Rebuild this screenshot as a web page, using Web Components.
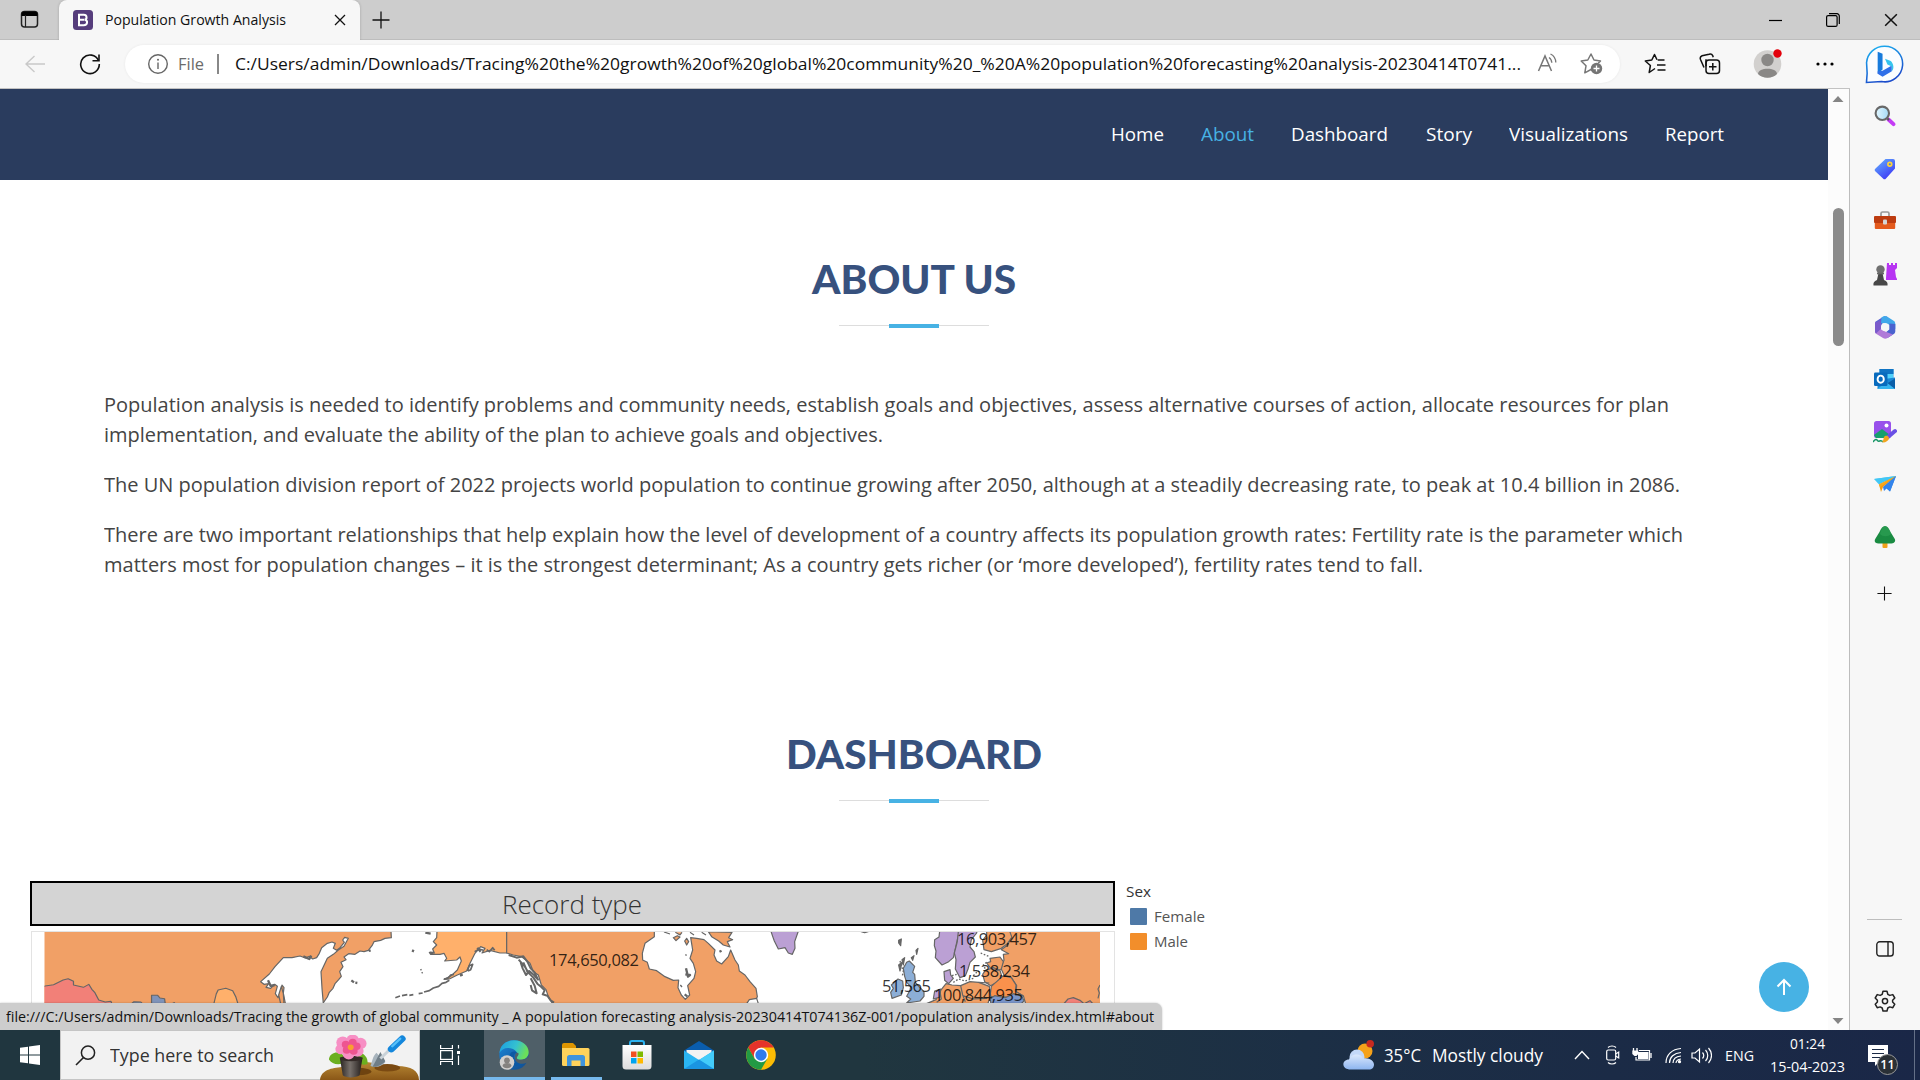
<!DOCTYPE html>
<html lang="en">
<head>
<meta charset="utf-8">
<title>Population Growth Analysis</title>
<style>
html,body{margin:0;height:100%;overflow:hidden;background:#fff}
body{font-family:"Open Sans","Noto Sans",sans-serif}
</style>
</head>
<body>
<desktop-screen></desktop-screen>
<script>
const ICONS = {
tabs:['0 0 20 20','<rect x="1.5" y="1.5" width="16" height="15.5" rx="3" fill="none" stroke="#222" stroke-width="1.5"/><path d="M1.5 6V4a2.5 2.5 0 0 1 2.500-2.500h11A2.500 2.500 0 0 1 17.500 4v2z" fill="#000"/><path d="M5.500 5v12" stroke="#222" stroke-width="1.200"/>'],
boot:['0 0 20 20','<rect width="20" height="20" rx="3.500" fill="#563d7c"/><path d="M6 4.800h4.800c3.300 0 3.700 4.300.800 4.900 3.600.500 3.200 5.500-.800 5.500H6zM6 9.700h5" fill="none" stroke="#fff" stroke-width="2"/>'],
close:['0 0 12 12','<path d="M1 1l10 10M11 1L1 11" stroke="#111" stroke-width="1.300"/>'],
plus:['0 0 18 18','<path d="M9 .5v17M.5 9h17" stroke="#111" stroke-width="1.300"/>'],
min:['0 0 14 14','<path d="M0 7.500h13" stroke="#000" stroke-width="1.200"/>'],
max:['0 0 14 14','<rect x=".6" y="2.600" width="10.500" height="10.800" rx="1.500" fill="none" stroke="#000" stroke-width="1.200"/><path d="M3 .600h7.500a2.600 2.600 0 0 1 2.800 2.800V11" fill="none" stroke="#000" stroke-width="1.200"/>'],
back:['0 0 20 18','<path d="M9.500 1L1 9l8.500 8M1 9h19" fill="none" stroke="#c9c9c9" stroke-width="1.400"/>'],
reload:['0 0 22 22','<path d="M19.500 7.500A9.300 9.300 0 1 0 20.300 11" fill="none" stroke="#111" stroke-width="1.600"/><path d="M20 1.500v6.200h-6.500" fill="none" stroke="#111" stroke-width="1.600"/>'],
info:['0 0 22 22','<circle cx="11" cy="11" r="9.300" fill="none" stroke="#666" stroke-width="1.400"/><path d="M11 9.500v6.500" stroke="#666" stroke-width="1.400"/><circle cx="11" cy="6.700" r="1" fill="#666"/>'],
read:['0 0 22 20','<path d="M1.500 18L8 3l6.500 15M4 12.700h8" fill="none" stroke="#777" stroke-width="1.500"/><path d="M12 4.500c2 1.300 2.700 3 2.800 5.300M13.500 1c3.700 1.800 5.200 4.500 5.300 8.500" fill="none" stroke="#777" stroke-width="1.300"/>'],
staradd:['0 0 24 24','<path d="M14.300 19.500 11 17.500l-6.200 3.300 1.200-7L1.200 9l6.600-1L11 2l3 6 6.500 1-2.300 2.300" fill="none" stroke="#777" stroke-width="1.500" stroke-linejoin="round"/><circle cx="16.500" cy="16.500" r="5.700" fill="#757575"/><path d="M16.500 13.500v6M13.500 16.500h6" stroke="#fff" stroke-width="1.300"/>'],
starlist:['0 0 23 22','<path d="M11 15.500 5.200 19.500l1.200-7L1.300 8l6.500-1L10.500 1.500 13 6.700M20.500 7h-6.800M21.500 12H13M21.500 17h-8" fill="none" stroke="#111" stroke-width="1.500" stroke-linejoin="round"/>'],
coll:['0 0 22 22','<rect x="7" y="7" width="13.500" height="13.500" rx="3" fill="none" stroke="#111" stroke-width="1.500"/><path d="M13.800 10v7.500M10 13.800h7.500M5 14.500 1.500 6.500a3 3 0 0 1 1.600-3.800L10 1.300a2.800 2.800 0 0 1 3.700 1.300l.5 1.700M7 6.300v7" fill="none" stroke="#111" stroke-width="1.500"/>'],
user:['0 0 30 30','<circle cx="14.500" cy="16" r="13.800" fill="#d2d0ce"/><circle cx="14.500" cy="12" r="6.200" fill="#8a8886"/><path d="M5 26c0-7 19-7 19 0-5 5-14 5-19 0z" fill="#8a8886"/><circle cx="24.500" cy="5.500" r="4.200" fill="#e3000b"/>'],
dots:['0 0 18 6','<circle cx="2" cy="3" r="1.600"/><circle cx="9" cy="3" r="1.600"/><circle cx="16" cy="3" r="1.600"/>'],
bing:['0 0 40 40','<defs><linearGradient id="a" x1="0" y1="0" x2=".4" y2="1"><stop stop-color="#1bb6f2"/><stop offset="1" stop-color="#1b4ccb"/></linearGradient></defs><path d="M20 1.200a18.300 18.300 0 1 1-3 36.300L1.500 38.500 2.200 29 1.600 18A18.300 18.300 0 0 1 20 1.200z" fill="#fbfdff" stroke="url(#a)" stroke-width="1.600"/><path d="M13 7l5 2v16l-5 4.500z" fill="#177bdc"/><path d="M13 27v2.500l5 3L27.500 27v-6L18 26.500z" fill="#2f6fe8"/><path d="M20.500 14l2.500 6 4.500 2v5c3-3 1.500-8-1-10.500z" fill="#35c5ee"/>'],
search:['0 0 22 22','<defs><linearGradient id="a"><stop stop-color="#e2f6ff"/><stop offset="1" stop-color="#a5dbf7"/></linearGradient></defs><path d="M14.500 14.500l5 4.700" stroke="#c43cf5" stroke-width="3.800" stroke-linecap="round"/><path d="M12.500 12.500l2.500 2.500" stroke="#555" stroke-width="2"/><circle cx="8.300" cy="8.300" r="6.700" fill="url(#a)" stroke="#686868" stroke-width="2.100"/>'],
tag:['0 0 22 22','<defs><linearGradient id="a" x1="0" y1="0" x2=".7" y2="1"><stop stop-color="#64b4ff"/><stop offset="1" stop-color="#3d37f5"/></linearGradient></defs><path d="M11.500 1H19a2 2 0 0 1 2 2v7.500L12 20.500a2 2 0 0 1-3 0L1.500 13.500a2 2 0 0 1 0-3z" fill="url(#a)"/><circle cx="15.800" cy="6.300" r="1.900" fill="#4d80d0" stroke="#ffd338" stroke-width="1.700"/>'],
tools:['0 0 24 22','<path d="M8 6V3.500A1.500 1.500 0 0 1 9.500 2h5A1.500 1.500 0 0 1 16 3.500V6" fill="none" stroke="#999" stroke-width="1.700"/><rect x="1.800" y="11" width="20.400" height="8" rx="1" fill="#e45a1c"/><rect x="1" y="6" width="22" height="7" rx="1" fill="#bd3c10"/><rect x="10" y="9.500" width="4" height="5" rx="1" fill="#d5d5d5"/>'],
chess:['0 0 24 24','<path d="M14 1h2v2h2V1h2v2h2V1h2v5l-2 2 1 7 1 2v1H13v-2z" fill="#b735f2"/><circle cx="7.500" cy="7.500" r="4.200" fill="#707070"/><path d="M5.500 11h4l1.500 7c3 1 4 3 3.500 5.500H.500C0 21 1 19 4 18z" fill="#484848"/><path d="M4 11.500h7" stroke="#666" stroke-width="1.600"/>'],
m365:['0 0 22 24','<path d="M1 7 8 2.500 13 1 9 7.500 7 12v4L1 17z" fill="#5b62d2"/><path d="M7.500 2.500C9 1 11 .5 13 1.500l7 4.500c1 .7 1.300 2 1.300 3v5L15 9.500 7 8z" fill="#41a8ea"/><path d="M21.300 9v7c0 1.500-.5 2.300-1.500 3l-6.300 4L11 18l4.300-3.500V8.500z" fill="#4a63cf"/><path d="M1 7.500v9c0 1 .5 2 1.500 2.500L9 23c1.500.9 3 .9 4.500 0l5.500-3.500-8-3L6.500 14V8z" fill="#b07ad8"/><path d="M1 8 6.700 5v9L2 18.500C1.300 18 1 17.300 1 16.500z" fill="#7a5bcb"/><circle cx="11" cy="12" r="4" fill="#f7f7f7"/>'],
outlook:['0 0 22 22','<rect x="5.500" y="1" width="14" height="14" fill="#29a2e6"/><path d="M5.500 1h14v5h-14z" fill="#1074c4"/><path d="M12 6h7v5h-7z" fill="#50d0fa"/><path d="M3.500 12 21 9.500V21H3.500z" fill="#1a88d6"/><path d="M13 15.500l8-5V21z" fill="#0b5ea8"/><path d="M3.500 21 12 14l9 7z" fill="#36b4ef"/><rect y="4.500" width="13.500" height="13.500" rx="1.300" fill="#086bbd"/><ellipse cx="6.700" cy="11.200" rx="3.100" ry="3.600" fill="none" stroke="#fff" stroke-width="1.900"/>'],
image:['0 0 24 24','<rect x="1" y="1" width="17" height="17" rx="2.500" fill="#9850eb"/><path d="M1 15 9 9l8 6v2l-2 1H3z" fill="#16a06d"/><circle cx="13.500" cy="5.500" r="2" fill="#fff"/><path d="M0 22c3-4 4-2 5-1s3-2 5 1" fill="none" stroke="#169565" stroke-width="1.500"/><path d="M22 11l-7 6" stroke="#6950e5" stroke-width="4" stroke-linecap="round"/><path d="M12 16c3-1 4 1 4 3-2 3-5 4-7 3 2-1 1-5 3-6z" fill="#f1a51e"/>'],
plane:['0 0 22 20','<path d="M0 5 22 2 16 8z" fill="#42c7f5"/><path d="M22 2 16 17.500l-6-5z" fill="#2582e8"/><path d="M22 2 5 10.500 7 18l2-5z" fill="#f39c12"/><path d="M0 5 22 2 5 10.500z" fill="#42c7f5"/><path d="M22 2 5 10.300 6 13z" fill="#f8a81c"/><path d="M22 2 9 13l1 4 3-3 3 3.500z" fill="#3384ec"/>'],
tree:['0 0 22 24','<rect x="8.500" y="17" width="5" height="6" rx="1" fill="#f1a21b"/><path d="M11 1c2 0 4 2 5.500 6l4 6.500c2 3-1 5-3 5h-13c-3 0-5-2-3-5l4-6.500C7 3 9 1 11 1z" fill="#1a8b42"/><path d="M11 1c3 0 5 5 6 8-3 3-8 3-11 0 1-4 3-8 5-8z" fill="#31a457" fill-opacity=".6"/>'],
panel:['0 0 18 16','<rect x=".8" y=".8" width="16.400" height="14.200" rx="2.800" fill="none" stroke="#222" stroke-width="1.400"/><path d="M12 1v14" stroke="#222" stroke-width="1.400"/>'],
gear:['0 0 22 22','<path d="M9 1.300h4l.8 3 2 1.100 3-.8 2 3.400-2.200 2.200v1.800l2.200 2.200-2 3.500-3-.8-2 1.100-.8 3H9l-.8-3-2-1.100-3 .800-2-3.500 2.200-2.200v-1.800L1.200 8l2-3.400 3 .8 2-1.100z" fill="none" stroke="#222" stroke-width="1.500" stroke-linejoin="round"/><circle cx="11" cy="11.100" r="2.600" fill="none" stroke="#222" stroke-width="1.500"/>'],
arrowup:['0 0 16 18','<path d="M8 17V2M1.500 8.500 8 2l6.500 6.500" fill="none" stroke="#fff" stroke-width="2"/>'],
triup:['0 0 12 8','<path d="M6 1l5.500 6H.5z" fill="#858585"/>'],
tridn:['0 0 12 8','<path d="M6 7L.5 1h11z" fill="#858585"/>'],
win:['0 0 20 20','<path d="M0 2.800l8-1.100v7.800H0zM9 1.500 20 0v9.500H9zM0 10.500h8v7.800l-8-1.100zM9 10.500h11V20L9 18.500z" fill="#fff"/>'],
mag:['0 0 21 21','<circle cx="13" cy="7.700" r="6.600" fill="none" stroke="#222" stroke-width="1.500"/><path d="M8.500 12.500 1 20" stroke="#222" stroke-width="1.600"/>'],
flower:['0 0 100 48','<defs><linearGradient id="g" x1="0" y1="0" x2="0" y2="1"><stop stop-color="#b98935"/><stop offset="1" stop-color="#8a5717"/></linearGradient><linearGradient id="p"><stop stop-color="#282220"/><stop offset=".45" stop-color="#77706b"/><stop offset="1" stop-color="#221c1a"/></linearGradient></defs><path d="M0 48c1-11 12-13 22-14l18-5c15-2 25 6 38 4 14 0 22 5 22 15z" fill="url(#g)"/><ellipse cx="38" cy="39" rx="14" ry="4" fill="#6e4310"/><ellipse cx="68" cy="35" rx="13" ry="4" fill="#7b4a12"/><path d="M9 26c1-8 10-9 14-5l3 8c-7 4-14 2-17-3zM48 31c1-7-4-12-9-12l-1 8c2 4 6 6 10 4z" fill="#6caf20"/><path d="M20 24h23l-3 19c-4 3-14 3-17 0z" fill="url(#p)"/><ellipse cx="31.500" cy="25" rx="11.500" ry="3" fill="#352b28"/><g fill="#f78fc4"><circle cx="23" cy="8" r="6.500"/><circle cx="33" cy="6" r="6.500"/><circle cx="41" cy="9" r="6"/><circle cx="38" cy="17" r="6"/><circle cx="29" cy="20" r="6"/><circle cx="21" cy="15" r="5.500"/></g><g fill="#ee5590"><circle cx="26" cy="10" r="4"/><circle cx="33" cy="8" r="4"/><circle cx="37" cy="12" r="4"/><circle cx="34" cy="17" r="4"/><circle cx="27" cy="16" r="4"/></g><circle cx="31" cy="13" r="3" fill="#f9a030"/><path d="M57 19l9 10c-4 5-10 6-15 4 2-5 2-10 6-14z" fill="#a8b4bd"/><path d="M61 18l5 10c-4 5-9 6-13 6z" fill="#707e87"/><path d="M61 25 70 16" stroke="#c9d2d8" stroke-width="3"/><path d="M72 15 83 4" stroke="#1487dc" stroke-width="7" stroke-linecap="round"/><path d="M73 12 81 4" stroke="#57c0fa" stroke-width="2.500" stroke-linecap="round"/>'],
task:['0 0 20 20','<path d="M.6 0v3.500h11.800V0M.6 20v-3.500h11.800V20M18.500 0v3.500M18.500 10.500V20" fill="none" stroke="#fff" stroke-width="1.200"/><rect x=".6" y="5.600" width="11.800" height="8.800" fill="none" stroke="#fff" stroke-width="1.200"/><rect x="17" y="6" width="3" height="3" fill="#fff"/>'],
edge:['0 0 30 30','<defs><linearGradient id="a" x1="0" y1="0" x2="1" y2=".3"><stop stop-color="#1b9de2"/><stop offset=".6" stop-color="#35c1d0"/><stop offset="1" stop-color="#6be05a"/></linearGradient><linearGradient id="b" x1="0" y1="0" x2="1" y2="1"><stop stop-color="#1b87da"/><stop offset="1" stop-color="#114a8b"/></linearGradient></defs><circle cx="15" cy="15" r="14.700" fill="url(#b)"/><path d="M.5 13C1 5 7 .3 15 .3c9 0 14.700 6 14.700 12 0 5-4 7.500-8 7.500-4 0-5-1.500-3.500-3.500S17 8 9 8C5 8 2 10 .5 13z" fill="url(#a)"/><path d="M11 14c-3 6 2 13 10 12l7-4c-7 4-13 1-13-5 0-3 1-4 3-4-2-2-5-2-7 1z" fill="#0c59a4"/><path d="M18.500 16.300c-1.500 2-.5 3.500 3.500 3.500 3 0 6-1 7.500-4l.5 5-2 2c-7 3-12-1-12-5s1-5 2.500-5 1.500 2 0 3.500z" fill="#4f5f68"/><circle cx="8" cy="22.500" r="7.300" fill="#d2d0ce"/><circle cx="8" cy="20.500" r="2.900" fill="#85827f"/><path d="M3.500 26c0-4 9-4 9 0-2 3-7 3-9 0z" fill="#85827f"/>'],
folder:['0 0 28 24','<path d="M0 2a2 2 0 0 1 2-2h9l3 3v6H0z" fill="#dd9500"/><path d="M0 5h26a1.500 1.500 0 0 1 1.500 1.500v15A1.500 1.500 0 0 1 26 23H1.500A1.500 1.500 0 0 1 0 21.500z" fill="#ffd35b"/><path d="M5 23V14.500A2.500 2.500 0 0 1 7.500 12h13a2.500 2.500 0 0 1 2.500 2.500V23h-4.500v-5.500h-9V23z" fill="#3f94dc"/>'],
store:['0 0 30 30','<defs><linearGradient id="a" x1="0" y1="0" x2="0" y2="1"><stop stop-color="#fff"/><stop offset="1" stop-color="#dcdcdc"/></linearGradient></defs><path d="M8 6V3a2 2 0 0 1 2-2h10a2 2 0 0 1 2 2v3" fill="none" stroke="#2bb2f0" stroke-width="2"/><path d="M.5 5h29v21a3.500 3.500 0 0 1-3.500 3.500H4A3.500 3.500 0 0 1 .5 26z" fill="url(#a)"/><path d="M9 11.500h5.500V17H9z" fill="#f25022"/><path d="M15.500 11.500H21V17h-5.500z" fill="#7fba00"/><path d="M9 18h5.500v5.500H9z" fill="#00a4ef"/><path d="M15.500 18H21v5.500h-5.500z" fill="#ffb900"/>'],
mail:['0 0 30 28','<path d="M0 9.500 15 0l15 9.500V20H0z" fill="#0a5dad"/><path d="M2.500 9h25v10h-25z" fill="#f3f3f3"/><path d="M0 9.500 15 19 30 9.500V27a1 1 0 0 1-1 1H1a1 1 0 0 1-1-1z" fill="#2ab5f3"/><path d="M30 9.500V27a1 1 0 0 1-1 1L15 19z" fill="#43ccfa"/><path d="M0 28 15 18.500 30 28z" fill="#1a95e2"/>'],
chrome:['0 0 30 30','<circle cx="15" cy="15" r="14.800" fill="#fbbc05"/><path d="M2.200 7.600A14.800 14.800 0 0 1 27.800 7.600H15L8.600 18.700z" fill="#e5332a"/><path d="M2.200 7.600A14.800 14.800 0 0 0 15 29.800l6.400-11.100H8.600z" fill="#229a44"/><circle cx="15" cy="15" r="7.200" fill="#fff"/><circle cx="15" cy="15" r="5.700" fill="#2f7bed"/>'],
cloud:['0 0 31 30','<defs><linearGradient id="a" x1="0" y1="0" x2="0" y2="1"><stop stop-color="#dbe8fd"/><stop offset="1" stop-color="#8db5f0"/></linearGradient></defs><circle cx="22" cy="11" r="7.500" fill="#f5a11a"/><circle cx="14" cy="17" r="7.500" fill="#c3d8f9"/><path d="M6 29.500c-8-1-7-10 0-10 2-6 12-7 14-1 7-1 11 3 11 6 0 3-2 5-5 5z" fill="url(#a)"/><circle cx="27.200" cy="3.800" r="3.800" fill="#c72a20"/>'],
chev:['0 0 16 10','<path d="M1 9l7-7.500L15 9" fill="none" stroke="#fff" stroke-width="1.400"/>'],
meet:['0 0 16 20','<rect x="1.700" y="5" width="9" height="10" rx="1.500" fill="none" stroke="#fff" stroke-width="1.200"/><path d="M10.700 9l3-2v6l-3-2M3 2.500c2-2 6-2 8 0M3 17.500c2 2 6 2 8 0" fill="none" stroke="#fff" stroke-width="1.200"/>'],
battery:['0 0 20 16','<path d="M7 3.500h10.500v9.500H4V10" fill="none" stroke="#fff" stroke-width="1.200"/><rect x="6" y="5" width="10.500" height="7" fill="#fff"/><path d="M19 6v5M1.500 1v3M5 1v3" stroke="#fff" stroke-width="1.300"/><path d="M.3 3.500h6V7L4.500 9h-2L.3 7z" fill="#fff"/>'],
wifi:['0 0 17 17','<g fill="none" stroke="#fff" stroke-width="1.200"><path d="M1 16C1 8 7 2 16 1.500M4.500 16c0-6 4.500-10 11.500-10.500M8 16c0-4 3-6.500 8-7M11 16c0-2 1.500-3.500 5-4"/></g><circle cx="14.500" cy="14.700" r="1.600" fill="#fff"/>'],
sound:['0 0 21 17','<path d="M1 6h3l4.500-4v13L4 11H1z" fill="none" stroke="#fff" stroke-width="1.200"/><path d="M11.500 5.500c1.500 1.800 1.500 4.200 0 6M14.500 3c3 3.200 3 7.800 0 11M17.500 1c4 4.500 4 10.500 0 15" fill="none" stroke="#fff" stroke-width="1.200"/>'],
note:['0 0 20 21','<path d="M0 0h20v17H11l-4 4v-4H0z" fill="#fff"/><path d="M4 4.500h12M4 8.500h12M4 12.500h9" stroke="#1b2a45" stroke-width="1.200"/>']
};

class UiIcon extends HTMLElement{
  constructor(){super();this.attachShadow({mode:'open'})}
  connectedCallback(){
    const [vb,body]=ICONS[this.getAttribute('name')];
    const w=this.getAttribute('w')||vb.split(' ')[2], h=this.getAttribute('h')||vb.split(' ')[3];
    this.shadowRoot.innerHTML=`<style>:host{display:block;flex:none;width:${w}px;height:${h}px}svg{display:block;width:100%;height:100%}</style><svg viewBox="${vb}" preserveAspectRatio="none">${body}</svg>`;
  }
}
customElements.define('ui-icon',UiIcon);

/* Single line of text stretched to a set width. */
class FitText extends HTMLElement{
  constructor(){
    super();this.attachShadow({mode:'open'}).innerHTML='<style>:host{display:block;flex:none;white-space:nowrap}span{display:inline-block;transform-origin:0 50%}</style><span><slot></slot></span>';
  }
  connectedCallback(){this.fit();if(document.fonts)document.fonts.ready.then(()=>this.fit())}
  fit(){
    const s=this.shadowRoot.querySelector('span'),w=+this.getAttribute('w');
    s.style.transform='';const n=s.getBoundingClientRect().width;
    this.style.width=w+'px';
    if(n)s.style.transform='scaleX('+(w/n)+')';
  }
}
customElements.define('fit-text',FitText);

function part(tag,html){
  customElements.define(tag,class extends HTMLElement{
    constructor(){super();this.attachShadow({mode:'open'})}
    connectedCallback(){this.shadowRoot.innerHTML=html}
  });
}

part('tab-strip',`<style>
:host{display:flex;height:39px;background:#cdcdcd;border-bottom:1px solid #bdbdbd;align-items:center;color:#111}
.tab{display:flex;align-items:center;box-sizing:border-box;width:301px;height:40px;margin:0 0 -1px 19px;padding-left:14px;background:#f7f7f7;border-radius:8px 8px 0 0;box-shadow:0 0 3px #0003;clip-path:inset(0 -4px 0 -4px)}
fit-text{font-size:14.5px;line-height:20px;margin:0 48px 0 12px}
</style>
<ui-icon name="tabs" style="margin-left:20px;margin-top:1px" w="20" h="20"></ui-icon>
<div class="tab"><ui-icon name="boot"></ui-icon><fit-text w="181">Population Growth Analysis</fit-text><ui-icon name="close"></ui-icon></div>
<ui-icon name="plus" style="margin-left:12px"></ui-icon>
<ui-icon name="min" style="margin-left:auto"></ui-icon>
<ui-icon name="max" style="margin-left:43px"></ui-icon>
<ui-icon name="close" w="14" h="14" style="margin:0 22px 0 44px"></ui-icon>`);

part('address-bar',`<style>
:host{display:flex;height:48px;background:#f7f7f7;border-bottom:1px solid #c2c2c2;align-items:center;width:1850px}
.pill{display:flex;align-items:center;box-sizing:border-box;width:1495px;height:38px;margin-left:24px;padding-left:22px;border-radius:19px;background:#fff;box-shadow:0 0 3px #0001}
.pill fit-text{font-size:17px;line-height:24px}
.bar{width:1.5px;height:20px;background:#888;margin:0 16px 0 13px}
</style>
<ui-icon name="back" style="margin-left:25px"></ui-icon>
<ui-icon name="reload" style="margin-left:34px"></ui-icon>
<div class="pill"><ui-icon name="info"></ui-icon><fit-text w="26" style="color:#6b6b6b;margin-left:9px">File</fit-text><div class="bar"></div>
<fit-text w="1286" style="color:#111">C:/Users/admin/Downloads/Tracing%20the%20growth%20of%20global%20community%20_%20A%20population%20forecasting%20analysis-20230414T0741...</fit-text>
<ui-icon name="read" style="margin-left:16px;margin-top:-3px"></ui-icon><ui-icon name="staradd" style="margin-left:21px"></ui-icon></div>
<ui-icon name="starlist" style="margin-left:24px"></ui-icon>
<ui-icon name="coll" style="margin-left:32px"></ui-icon>
<ui-icon name="user" style="margin-left:32px;margin-top:-2px"></ui-icon>
<ui-icon name="dots" style="margin-left:33px"></ui-icon>`);

part('side-bar',`<style>
:host{display:flex;flex-direction:column;align-items:center;box-sizing:border-box;width:70px;background:#f7f7f7;padding-right:1px}
div{display:flex;align-items:center;justify-content:center;height:52.6px;flex:none}
hr{width:35px;height:1px;border:0;background:#bdbdbd;margin:auto 0 0;flex:none}
</style>
<div style="height:50px;padding-bottom:0"><ui-icon name="bing" w="39" h="39" style="margin-top:-2px"></ui-icon></div>
${['search','tag','tools','chess','m365','outlook','image','plane','tree'].map(n=>`<div><ui-icon name="${n}"></ui-icon></div>`).join('')}
<div style="height:61px"><ui-icon name="plus" w="15" h="15"></ui-icon></div>
<hr><div style="height:58px"><ui-icon name="panel"></ui-icon></div><div style="height:46px;padding-bottom:6px"><ui-icon name="gear"></ui-icon></div>`);

part('page-nav',`<style>
:host{display:flex;height:91px;box-sizing:border-box;padding-bottom:2px;align-items:center;justify-content:flex-end;background:#2a3c5e;padding-right:104px;gap:37.2px;color:#fff;font-size:18.5px;line-height:28px;font-weight:500}
</style>
<fit-text w="53">Home</fit-text><fit-text w="53" style="color:#47b2e4">About</fit-text><fit-text w="97">Dashboard</fit-text><fit-text w="46">Story</fit-text><fit-text w="119">Visualizations</fit-text><fit-text w="59">Report</fit-text>`);

part('section-title',`<style>
:host{display:flex;flex-direction:column;align-items:center;height:85px}
.t{font:900 39px/48px Lato,"Open Sans",sans-serif;color:#37517e}
.rule{display:flex;align-items:center;width:150px;height:4px;margin-top:21px;justify-content:center;background:linear-gradient(#ddd,#ddd) 0 1px/100% 1px no-repeat}
.rule i{width:50px;height:4px;background:#47b2e4}
</style><div class="t"><slot></slot></div><div class="rule"><i></i></div>`);

part('about-text',`<style>
:host{display:flex;flex-direction:column;gap:20px;padding:0 104px;color:#444;font-size:20px;line-height:30px}
</style>
<div><fit-text w="1565">Population analysis is needed to identify problems and community needs, establish goals and objectives, assess alternative courses of action, allocate resources for plan</fit-text><fit-text w="779">implementation, and evaluate the ability of the plan to achieve goals and objectives.</fit-text></div>
<fit-text w="1576">The UN population division report of 2022 projects world population to continue growing after 2050, although at a steadily decreasing rate, to peak at 10.4 billion in 2086.</fit-text>
<div><fit-text w="1579">There are two important relationships that help explain how the level of development of a country affects its population growth rates: Fertility rate is the parameter which</fit-text><fit-text w="1319">matters most for population changes – it is the strongest determinant; As a country gets richer (or ‘more developed’), fertility rates tend to fall.</fit-text></div>`);

part('world-map',`<style>:host{display:block;width:1085px;height:100px}svg{display:block;overflow:visible}text{font:16.5px "Open Sans",sans-serif;fill:#000;fill-opacity:.8}</style>
<svg width="1085" height="100" viewBox="30 931 1085 100">
<defs><clipPath id="c"><rect x="44.500" y="932" width="1055.500" height="100"/></clipPath></defs>
<rect x="31.500" y="931.500" width="1083" height="120" fill="#fff" stroke="#e3e3e3"/>
<g clip-path="url(#c)" stroke="#666" stroke-linejoin="round">
<g transform="translate(240 925) scale(.33333)" stroke-width="3.600" fill="#f1a066">
<path d="M-620 0H452L454 38 435 40 422 46 402 50 396 62 385 76 372 80 360 78 345 88 326 86 312 96 318 104 303 112 309 125 299 140 304 154 296 164 285 176 279 190 268 202 262 216 248 236V300H-620z"/>
<path fill="#fff" d="M250 236 246 190 243 140 262 100 280 88 295 75 312 64 325 40 314 37 308 45 313 52 300 68 290 76 280 70 286 55 276 51 262 55 245 68 238 85 230 98 218 102 208 94 196 99 180 93 156 98 130 98 105 125 88 147 62 170 72 178 86 176 78 187 92 190 104 178 112 184 106 206 114 218 122 202 126 180 132 188 130 204 137 240z"/>
<path d="M122 236 116 210 124 184 130 206 132 236z"/>
<path d="M592 0 590 38 580 50 590 60 578 72 583 84 568 82 572 88 600 88 612 85 620 100 614 108 650 105 660 96 664 108 652 135 634 152 612 163 628 162 652 150 680 138 690 115 705 85 722 65 735 70 726 84 750 76 780 84 800 84V0z" fill="#ffb06b"/>
<path d="M800 0H1243V35L1215 55 1207 85 1208 105 1222 112 1228 132 1250 137 1275 155 1300 166 1316 165 1314 188 1324 210 1336 223 1349 210 1343 182 1362 160 1367 140 1360 115 1350 100 1358 75 1354 50 1352 38 1370 40 1392 44 1405 55 1425 75 1422 90 1430 108 1445 117 1465 95 1472 75 1485 105 1495 120 1498 138 1515 150 1530 170 1548 190 1552 215 1540 240H940L925 215 918 194 904 180 895 150 880 140 870 115 845 95 820 90 800 84z"/>
<path d="M1405 20 1415 35 1436 48 1450 60 1470 66 1462 50 1478 44 1466 38 1476 22z"/>
<path d="M1300 38 1312 32 1320 36 1308 47zM1334 48 1340 40 1346 50 1340 60zM1272 21 1290 27M1306 22 1320 30 1326 22M1350 22 1362 30M1385 22 1398 30"/>
<path d="M1520 236 1528 224 1550 220 1555 236z" fill="#fff"/>
<path fill="none" stroke-width="6" d="M806 90 830 98 850 94 862 110 872 130 884 142 894 164 882 150 868 138 858 150 848 130 842 112M850 112 862 140 880 158 892 176 904 186 914 196 908 208 922 212 932 226 942 233M872 160 884 182 890 205 876 196 872 180M836 104 854 124 866 145"/>
<path fill="none" stroke-width="5" d="M466 218 480 213M486 212 502 209M508 211 520 209M536 206 548 204M552 201 568 197 580 189 596 184 606 175 618 172 628 166M612 162 624 160 632 150 642 148M682 138 688 122 698 118 692 134 684 138M704 80 718 72 730 76M740 74 748 80 758 68 764 76"/>
<path fill="none" stroke-width="7" d="M334 166 342 172M346 173 352 174M516 76 522 79M570 83 580 84M660 152 668 148M386 78 392 76M1440 76 1443 82M1338 130 1344 155 1350 150 1336 148M1334 208 1342 214M190 94 208 102 214 92M84 166 92 183 104 180M712 68 722 80M556 23 572 26"/>
<path fill="none" stroke-width="4" d="M545 142 548 145M542 132 544 136M1336 89 1340 91M1321 180 1326 186"/>
</g>
<g transform="translate(0 870) scale(.3827 .33333)" stroke-width="3.200">
<path d="M100 352 118 348 140 344 165 330 178 326 192 334 192 345 218 352 232 343 240 358 248 368 258 390 275 396 290 394 298 420H100z" fill="#f28078"/>
<path d="M396 376 412 376 418 384 430 386 434 420H396zM340 405 350 395 368 396 376 405zM448 402 455 398 460 404z" fill="#7f93ba"/>
<path d="M558 405 565 372 570 360 590 355 608 362 616 380 624 410z" fill="#ffb06b"/>
</g>
<g transform="translate(740 925) scale(.33333)" stroke-width="3.600" fill="#f1a066">
<path fill="#bba0d4" d="M90 10 98 34 103 48 115 72 135 68 145 84 157 88 165 70 164 50 178 10z"/>
<path fill="#666" d="M364 20 374 23 384 20zM476 46 484 42 482 62 476 54zM528 76 534 70 530 88zM514 98 522 92 518 106zM486 104 494 98 490 120zM476 120 486 112 480 138z"/>
<path fill="#8caed6" d="M500 112 508 108 524 124 518 142 524 148 526 172 538 186 552 200 552 214 540 228 500 234 512 222 500 214 510 196 512 184 500 172 494 154 490 130z"/>
<path fill="#8caed6" d="M474 162 488 168 490 188 484 210 456 220 452 202 460 190 454 180z"/>
<path fill="#bba0d4" d="M600 10 597 36 584 44 583 62 588 78 586 98 606 120 626 110 640 98 645 76 652 44 660 10z"/>
<path fill="#bba0d4" d="M656 10 652 50 643 84 648 104 646 132 660 158 676 152 684 132 690 112 706 96 702 80 690 66 694 44 710 24 712 10z"/>
<path d="M740 10 740 30 728 46 732 74 754 80 784 70 802 56 816 36 812 10z"/>
<path d="M806 10 816 38 800 62 784 74 806 86 790 88 792 106 782 128 792 150 814 158 830 182 828 200 850 212 858 240H1100V10z"/>
<path d="M750 100 780 96 790 110 784 132 770 138 752 130 740 114 752 110zM736 136 760 128 780 136 786 156 770 172 752 182 734 170 728 148z"/>
<path d="M754 184 770 170 790 152 814 158 828 180 826 198 848 212 800 216 750 214z" fill="#f9914c"/>
<path d="M560 236 588 224 602 196 618 176 636 180 662 182 690 170 716 172 748 184 752 212 742 240z"/>
<path fill="none" d="M662 182 668 210 676 230M600 200 604 222 590 232M668 212 700 222 742 220M716 172 748 174M1080 180 1074 192 1078 204 1074 220"/>
<path fill="#bba0d4" d="M612 140 630 134 632 150 640 160 626 176 614 166zM584 198 602 192 600 216 580 222z"/>
<path fill="#7a95ca" d="M750 222 764 212 796 218 820 206 846 214 852 228 840 240H754z"/>
<path fill="#f28078" d="M970 238 984 222 1000 218 1020 226 1032 236 1050 227 1062 240z"/>
<path fill="none" stroke-width="4" stroke-dasharray="5 5" d="M640 172 656 162 676 168 700 160M700 152 714 138 722 142M740 112 730 120 736 132M722 84 746 94M480 108 490 140 486 156M636 152 650 148"/>
</g></g>
<text x="549" y="965.500" textLength="90">174,650,082</text>
<text x="957" y="944.500" textLength="80">16,903,457</text>
<text x="959" y="977" textLength="71">1,538,234</text>
<text x="882" y="991.500" textLength="49">51,565</text>
<text x="934" y="1000.500" textLength="89">100,844,935</text>
</svg>`);

part('record-dashboard',`<style>
:host{display:flex;padding-left:30px;gap:11px;height:149px;color:#333}
.head{box-sizing:border-box;width:1085px;height:45px;border:2px solid #000;background:#d4d4d4;display:flex;justify-content:center;align-items:center;font-weight:300;font-size:25.500px;line-height:40px;margin-bottom:5px;padding-right:2px}
.leg{font-size:15px;line-height:20px}
.row{display:flex;align-items:center;gap:7px;height:25px;padding-left:4px;color:#555}
.row fit-text{margin-top:-2px}
.row i{width:17px;height:17px;border-radius:1px}
</style>
<div><div class="head"><fit-text w="140">Record type</fit-text></div><world-map></world-map></div>
<div class="leg"><fit-text w="25" style="margin-bottom:3px">Sex</fit-text>
<div class="row"><i style="background:#4e79a7"></i><fit-text w="51">Female</fit-text></div>
<div class="row"><i style="background:#f28e2b"></i><fit-text w="34">Male</fit-text></div></div>`);

part('scroll-bar',`<style>
:host{display:flex;flex-direction:column;align-items:center;width:21px;background:#fcfcfc;border-right:1px solid #bdbdbd}
i{width:11px;height:138px;border-radius:6px;background:#8b8b8b;margin-top:105px}
</style><ui-icon name="triup" style="margin-top:6px;margin-left:-1px"></ui-icon><i></i><ui-icon name="tridn" style="margin:auto 0 5px -1px"></ui-icon>`);

part('task-bar',`<style>
:host{display:flex;height:50px;align-items:center;background:linear-gradient(90deg,#20363f 0,#20363f 45%,#1c2f45 68%,#1a2747 100%);color:#fff;font-size:18px;line-height:26px}
.s{display:flex;align-items:center;box-sizing:border-box;width:360px;height:50px;margin-left:20px;padding-left:14px;background:#f2f2f2;border:1px solid #c5c5c5;color:#333}
.tile{display:flex;align-items:center;justify-content:center;box-sizing:border-box;height:50px;border-bottom:3px solid #76b9ed;padding-top:3px}
.clock{display:flex;flex-direction:column;align-items:center;font-size:15px;line-height:23px;width:77px;margin-left:15px}
.note{position:relative;margin-left:22px}
.b{position:absolute;left:9px;top:9px;width:19px;height:19px;border:1px solid #999;border-radius:50%;background:#2a3036;font:600 12.500px/19px "Open Sans",sans-serif;text-align:center}
.end{width:1px;height:50px;background:#647087;margin-left:auto;margin-right:5px}
</style>
<ui-icon name="win" style="margin-left:20px"></ui-icon>
<div class="s"><ui-icon name="mag"></ui-icon><fit-text w="164" style="margin-left:14px">Type here to search</fit-text><ui-icon name="flower" style="margin-left:46px;margin-top:4px" w="99" h="45"></ui-icon></div>
<ui-icon name="task" style="margin-left:20px"></ui-icon>
<div class="tile" style="margin-left:24px;width:61px;background:#4f5f68"><ui-icon name="edge" style="margin-left:-1px"></ui-icon></div>
<div class="tile" style="margin-left:6px;width:51px"><ui-icon name="folder" style="margin-left:-1px"></ui-icon></div>
<ui-icon name="store" style="margin-left:20px"></ui-icon>
<ui-icon name="mail" style="margin-left:32px"></ui-icon>
<ui-icon name="chrome" style="margin-left:32px"></ui-icon>
<ui-icon name="cloud" style="margin-left:567px"></ui-icon>
<fit-text w="37" style="margin-left:10px">35°C</fit-text><fit-text w="111" style="margin-left:11px">Mostly cloudy</fit-text>
<ui-icon name="chev" style="margin-left:31px"></ui-icon><ui-icon name="meet" style="margin-left:15px"></ui-icon><ui-icon name="battery" style="margin-left:11px"></ui-icon><ui-icon name="wifi" style="margin-left:13px"></ui-icon><ui-icon name="sound" style="margin-left:9px"></ui-icon>
<fit-text w="29" style="margin-left:13px;font-size:15px">ENG</fit-text>
<div class="clock"><fit-text w="35">01:24</fit-text><fit-text w="75">15-04-2023</fit-text></div>
<div class="note"><ui-icon name="note"></ui-icon><div class="b">11</div></div>
<div class="end"></div>`);

part('desktop-screen',`<style>
:host{display:flex;flex-direction:column;width:1920px;height:1080px;overflow:hidden}
.mid{display:flex;height:990px}
.left{display:flex;flex-direction:column;width:1850px}
.view{display:flex;flex:1;min-height:0}
.page{position:relative;width:1828px;background:#fff;overflow:hidden}
.top{position:absolute;right:19px;bottom:18px;width:50px;height:50px;border-radius:50%;background:#47b2e4;display:flex;align-items:center;justify-content:center}
.status{position:absolute;left:0;bottom:0;width:1162px;height:27px;box-sizing:border-box;padding-left:6px;background:#cdcdcd;border-radius:0 7px 0 0;font-size:14.500px;line-height:27px;color:#111;box-shadow:0 0 2px #0004}
</style>
<tab-strip></tab-strip>
<div class="mid"><div class="left"><address-bar></address-bar>
<div class="view"><div class="page"><page-nav></page-nav>
<section-title style="margin-top:75px"><fit-text w="204">ABOUT US</fit-text></section-title>
<about-text style="margin-top:50px"></about-text>
<section-title style="margin-top:150px"><fit-text w="256">DASHBOARD</fit-text></section-title>
<record-dashboard style="margin-top:66px"></record-dashboard>
<div class="top"><ui-icon name="arrowup"></ui-icon></div>
<div class="status"><fit-text w="1148">file:///C:/Users/admin/Downloads/Tracing the growth of global community _ A population forecasting analysis-20230414T074136Z-001/population analysis/index.html#about</fit-text></div>
</div><scroll-bar></scroll-bar></div></div><side-bar></side-bar></div>
<task-bar></task-bar>`);
</script>
</body>
</html>
